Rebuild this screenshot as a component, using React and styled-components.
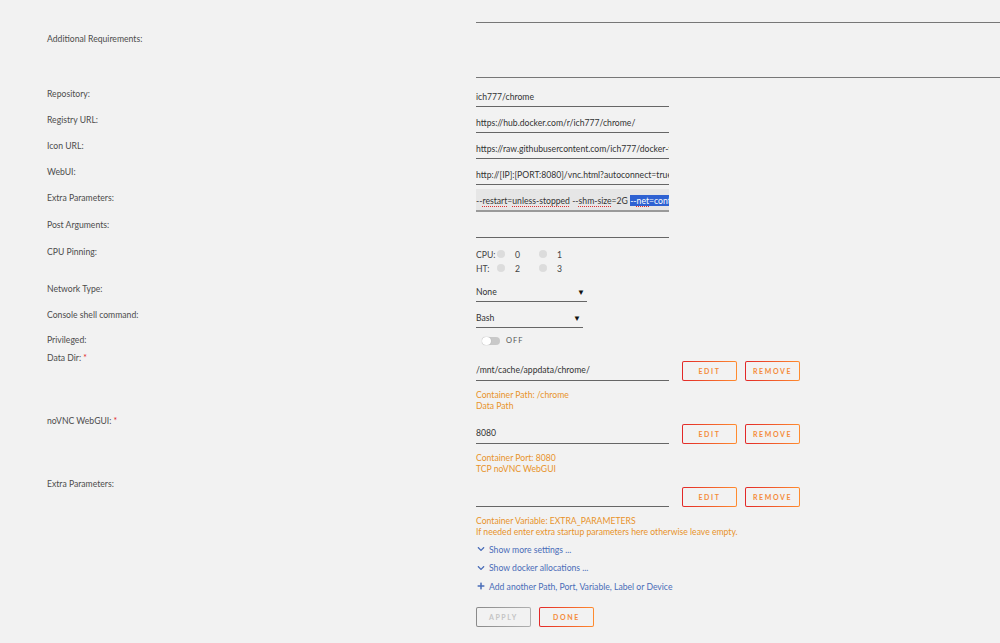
import React from "react";
import styled, { createGlobalStyle } from "styled-components";
import { FaChevronDown, FaPlus } from "react-icons/fa";

const GlobalStyle = createGlobalStyle`
  html, body {
    margin: 0;
    background: #f2f2f2;
  }
  body {
    font-family: Lato, "Open Sans", sans-serif;
    font-size: 8.65px;
    color: #4c4c4c;
    overflow: hidden;
  }
`;

const Form = styled.div`
  display: flex;
  flex-direction: column;
  width: 1000px;
  height: 643px;
`;

const Row = styled.div`
  display: flex;
  margin-bottom: ${(p) => p.$gap ?? 4}px;
`;

const Label = styled.div`
  width: 476px;
  flex-shrink: 0;
  box-sizing: border-box;
  padding: ${(p) => p.$top ?? 3}px 0 0 47px;
  line-height: 12px;
`;

const Required = styled.span`
  color: #e22828;
`;

const Content = styled.div`
  flex: 1;
  padding-top: ${(p) => p.$top ?? 0}px;
  min-width: 0;
`;

const TextArea = styled.div`
  margin-top: 22px;
  height: 56px;
  box-sizing: border-box;
  border-top: 1px solid #777;
  border-bottom: 1px solid #777;
`;

const Field = styled.div`
  width: ${(p) => p.$w ?? 193}px;
  height: ${(p) => (p.$focus ? 23 : 22)}px;
  box-sizing: border-box;
  padding: ${(p) => p.$pt ?? 6}px 0 3px;
  line-height: 12px;
  color: #333;
  white-space: nowrap;
  overflow: hidden;
  background: ${(p) => (p.$focus ? "#e6e6e6" : "transparent")};
  border-bottom: ${(p) => (p.$focus ? "2px solid #9a9a9a" : "1px solid #666")};
`;

const Spell = styled.span`
  text-decoration: underline dotted #e03030;
  text-decoration-thickness: 1px;
  text-underline-offset: 2px;
`;

const Selected = styled.span`
  background: #2f62d2;
  color: #fff;
`;

const Select = styled(Field)`
  display: flex;
  justify-content: space-between;
  padding-right: 2px;
`;

const Arrow = styled.span`
  color: #111;
  font-size: 8px;
`;

const PinGrid = styled.div`
  display: grid;
  grid-template-columns: 21px 42px 42px;
  grid-auto-rows: 14px;
  padding-top: 4px;
  padding-bottom: 5px;
  align-items: center;
  color: #444;
`;

const Pin = styled.div`
  display: flex;
  align-items: center;
  gap: 10px;
  &::before {
    content: "";
    width: 8px;
    height: 8px;
    border-radius: 50%;
    background: #dcdcdc;
  }
`;

const Toggle = styled.div`
  display: flex;
  align-items: center;
  gap: 6px;
  height: 17px;
  padding-left: 6px;
  color: #555;
  font-size: 7.5px;
  letter-spacing: 1px;
`;

const Track = styled.div`
  width: 18px;
  height: 8px;
  box-sizing: border-box;
  border-radius: 4px;
  background: #c9c9c9;
  display: flex;
  align-items: center;
  &::before {
    content: "";
    width: 9px;
    height: 8px;
    border-radius: 4px;
    background: #fff;
    box-shadow: 0 0 1px #999;
  }
`;

const FieldLine = styled.div`
  display: flex;
  align-items: flex-end;
  gap: 8px;
`;

const Button = styled.div`
  width: 55px;
  height: 20px;
  box-sizing: border-box;
  margin-left: ${(p) => p.$ml ?? 0}px;
  display: flex;
  align-items: center;
  justify-content: center;
  border: 1px solid transparent;
  border-radius: 2px;
  background: linear-gradient(#f2f2f2, #f2f2f2) padding-box,
    ${(p) =>
      p.$disabled
        ? "linear-gradient(90deg, #8a8a8a, #b0b0b0)"
        : "linear-gradient(90deg, #e22828, #ff8c2f)"}
      border-box;
  color: ${(p) => (p.$disabled ? "#c4c4c4" : "#f48b3a")};
  font-size: 7px;
  font-weight: 700;
  letter-spacing: 1.6px;
`;

const Hint = styled.div`
  margin-top: ${(p) => p.$mt ?? 0}px;
  color: #e8922a;
  line-height: 11px;
`;

const Links = styled.div`
  display: flex;
  flex-direction: column;
  padding-left: 477px;
  margin-top: 2px;
`;

const Link = styled.div`
  display: flex;
  align-items: center;
  gap: 4px;
  height: 18.5px;
  color: #4a6db8;
  svg {
    width: 8px;
    height: 8px;
  }
`;

const Actions = styled.div`
  display: flex;
  gap: 8px;
  padding-left: 476px;
  margin-top: 11px;
`;

const TextRow = ({ label, value, focus, gap, children }) => (
  <Row $gap={gap}>
    <Label>{label}</Label>
    <Content>
      <Field $focus={focus}>{children ?? value}</Field>
    </Content>
  </Row>
);

const PathRow = ({ label, required, value, hints }) => (
  <Row $gap={1}>
    <Label>
      {label} {required && <Required>*</Required>}
    </Label>
    <Content $top={10}>
      <FieldLine>
        <Field $pt={5}>{value}</Field>
        <Button $ml={5}>EDIT</Button>
        <Button>REMOVE</Button>
      </FieldLine>
      <Hint $mt={8}>{hints[0]}</Hint>
      <Hint>{hints[1]}</Hint>
    </Content>
  </Row>
);

const App = () => {
  return (
    <>
      <GlobalStyle />
      <Form>
        <Row $gap={7}>
          <Label $top={33}>Additional Requirements:</Label>
          <Content>
            <TextArea />
          </Content>
        </Row>
        <TextRow label="Repository:" value="ich777/chrome" />
        <TextRow label="Registry URL:" value="https://hub.docker.com/r/ich777/chrome/" />
        <TextRow
          label="Icon URL:"
          value="https://raw.githubusercontent.com/ich777/docker-templates/master/ich777/images/chrome.png"
        />
        <TextRow
          label="WebUI:"
          value="http://[IP]:[PORT:8080]/vnc.html?autoconnect=true&reconnect=true&resize=scale"
        />
        <TextRow label="Extra Parameters:" focus>
          --<Spell>restart</Spell>=<Spell>unless-stopped</Spell> --<Spell>shm-size</Spell>=2G{" "}
          <Selected>
            --<Spell>net</Spell>=container:vpn
          </Selected>
        </TextRow>
        <TextRow label="Post Arguments:" value="" gap={5} />
        <Row $gap={0}>
          <Label>CPU Pinning:</Label>
          <Content>
            <PinGrid>
              <span>CPU:</span>
              <Pin>0</Pin>
              <Pin>1</Pin>
              <span>HT:</span>
              <Pin>2</Pin>
              <Pin>3</Pin>
            </PinGrid>
          </Content>
        </Row>
        <Row>
          <Label>Network Type:</Label>
          <Content>
            <Select $w={111}>
              <span>None</span>
              <Arrow>▼</Arrow>
            </Select>
          </Content>
        </Row>
        <Row>
          <Label>Console shell command:</Label>
          <Content>
            <Select $w={107}>
              <span>Bash</span>
              <Arrow>▼</Arrow>
            </Select>
          </Content>
        </Row>
        <Row $gap={0}>
          <Label $top={2}>Privileged:</Label>
          <Content>
            <Toggle>
              <Track />
              OFF
            </Toggle>
          </Content>
        </Row>
        <PathRow
          label="Data Dir:"
          required
          value="/mnt/cache/appdata/chrome/"
          hints={["Container Path: /chrome", "Data Path"]}
        />
        <PathRow
          label="noVNC WebGUI:"
          required
          value="8080"
          hints={["Container Port: 8080", "TCP noVNC WebGUI"]}
        />
        <PathRow
          label="Extra Parameters:"
          value=""
          hints={[
            "Container Variable: EXTRA_PARAMETERS",
            "If needed enter extra startup parameters here otherwise leave empty.",
          ]}
        />
        <Links>
          <Link>
            <FaChevronDown />
            Show more settings ...
          </Link>
          <Link>
            <FaChevronDown />
            Show docker allocations ...
          </Link>
          <Link>
            <FaPlus />
            Add another Path, Port, Variable, Label or Device
          </Link>
        </Links>
        <Actions>
          <Button $disabled>APPLY</Button>
          <Button>DONE</Button>
        </Actions>
      </Form>
    </>
  );
};

export default App;
